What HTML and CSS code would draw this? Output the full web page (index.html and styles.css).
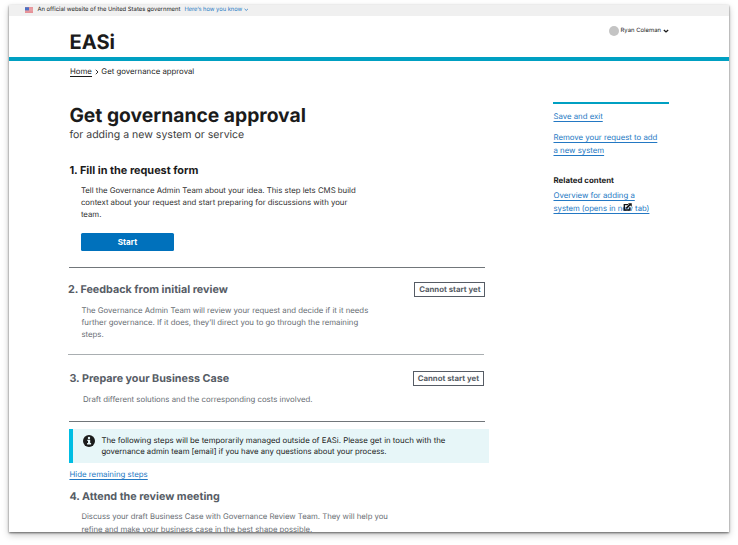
FILE: index.html
```html
<!DOCTYPE html>
<html lang="en">
<head>
<meta charset="utf-8">
<title>EASi – Get governance approval</title>
<link rel="stylesheet" href="styles.css">
</head>
<body>
<div class="page">
  <div class="gov-banner">
    <svg class="flag" viewBox="0 0 16 11"><rect width="16" height="11" fill="#f3d9dc"/><path d="M0 .8h16M0 3.2h16M0 5.6h16M0 8h16M0 10.3h16" stroke="#dd5a62" stroke-width="1.3"/><rect width="8" height="6.3" fill="#4a6fc4"/></svg>
    <span class="gov-text">An official website of the United States government</span>
    <a class="gov-link">Here’s how you know</a>
    <svg class="gov-chevron" viewBox="0 0 8 6"><path d="M1 1.500l3 2.700 3-2.700" fill="none" stroke="#2378c3" stroke-width="1.400"/></svg>
  </div>
  <header class="header">
    <div class="logo">EASi</div>
    <div class="user">
      <span class="avatar"></span>
      <span class="user-name">Ryan Coleman</span>
      <svg class="user-chevron" viewBox="0 0 12 8"><path d="M1.700 1.800L6 5.800l4.300-4" fill="none" stroke="#1b1b1b" stroke-width="2.700"/></svg>
    </div>
  </header>
  <nav class="breadcrumb">
    <a class="crumb-home">Home</a>
    <svg class="crumb-sep" viewBox="0 0 4 6"><path d="M.8.8L3 3 .8 5.200" fill="none" stroke="#1b1b1b" stroke-width=".9"/></svg>
    <span class="crumb-current">Get governance approval</span>
  </nav>
  <div class="columns">
    <main class="main">
      <h1 class="title">Get governance approval</h1>
      <p class="subtitle">for adding a new system or service</p>

      <section class="step step-1">
        <h2 class="step-title">1. Fill in the request form</h2>
        <p class="step-text dark">Tell the Governance Admin Team about your idea. This step lets CMS build<br>context about your request and start preparing for discussions with your<br>team.</p>
        <button class="start">Start</button>
      </section>

      <section class="step step-2">
        <div class="step-head">
          <h2 class="step-title muted">2. Feedback from initial review</h2>
          <span class="badge">Cannot start yet</span>
        </div>
        <p class="step-text">The Governance Admin Team will review your request and decide if it it needs<br>further governance. If it does, they’ll direct you to go through the remaining<br>steps.</p>
      </section>

      <section class="step step-3">
        <div class="step-head">
          <h2 class="step-title muted">3. Prepare your Business Case</h2>
          <span class="badge">Cannot start yet</span>
        </div>
        <p class="step-text">Draft different solutions and the corresponding costs involved.</p>
      </section>

      <div class="alert">
        <svg class="info" viewBox="0 0 12 12"><circle cx="6" cy="6" r="6" fill="#1b1b1b"/><circle cx="6" cy="3" r="1.200" fill="#e7f6f8"/><path d="M4.300 4.700h2.900v3.400h.9v1.500H4.100V8.100H5v-2h-.7z" fill="#e7f6f8"/></svg>
        <p class="alert-text">The following steps will be temporarily managed outside of EASi. Please get in touch with the<br><span class="alert-line2">governance admin team [email] if you have any questions about your process.</span></p>
      </div>
      <a class="link hide-link">Hide remaining steps</a>

      <section class="step step-4">
        <h2 class="step-title muted">4. Attend the review meeting</h2>
        <p class="step-text">Discuss your draft Business Case with Governance Review Team. They will help you<br>refine and make your business case in the best shape possible.</p>
      </section>
    </main>
    <aside class="side">
      <p class="side-item"><a class="link">Save and exit</a></p>
      <p class="side-item"><a class="link">Remove your request to add<br>a new system</a></p>
      <h3 class="side-title">Related content</h3>
      <p class="side-item related"><a class="link">Overview for adding a<br><span class="tight">system (opens in new tab)</span></a>
        <svg class="external" viewBox="0 0 10 9"><path d="M6 1.900H1.400v6h6.200V5" fill="none" stroke="#111" stroke-width="1.500"/><path d="M3.600 6L8 1.700" stroke="#111" stroke-width="1.900"/><path d="M5.500.2H9.800V4.300z" fill="#111"/></svg>
      </p>
    </aside>
  </div>
</div>
</body>
</html>
```
FILE: styles.css
```css
* { box-sizing: border-box; margin: 0; padding: 0; }
body {
  height: 545px;
  padding: 5px 9px 0;
  overflow: hidden;
  background: #fff;
  color: #1b1b1b;
  font: 7.8px/12px Inter, "Liberation Sans", sans-serif;
  text-rendering: geometricPrecision;
  white-space: nowrap;
}
svg { display: block; flex: none; }
.page {
  width: 720px;
  height: 527px;
  overflow: hidden;
  background: #fff;
  box-shadow: 0 1px 2px rgba(0, 0, 0, .55), 0 3px 7px rgba(0, 0, 0, .22);
}
.gov-banner {
  display: flex;
  align-items: center;
  height: 10.5px;
  padding-left: 16.4px;
  background: #f0f0f0;
  font-size: 5.9px;
  line-height: 10px;
}
.flag { width: 8px; height: 6px; margin-right: 4px; }
.gov-link { margin-left: 4px; color: #2378c3; font-size: 5.76px; }
.gov-chevron { width: 4.5px; height: 3.5px; margin: 0 0 1px 2px; }
.header {
  display: flex;
  justify-content: space-between;
  height: 45.5px;
  padding: 0 60px 0 60.5px;
  border-bottom: 4px solid #00a0c2;
}
.logo { padding-top: 14.2px; font-size: 20.1px; font-weight: 700; line-height: 24px; }
.user { display: flex; align-items: center; height: 10px; margin-top: 10.5px; }
.avatar { width: 10px; height: 10px; border-radius: 50%; background: #c4c4c4; }
.user-name { margin-left: 1.5px; font-size: 5.94px; line-height: 10px; }
.user-chevron { width: 6px; height: 4px; margin-left: 2px; }
.breadcrumb { display: flex; align-items: center; height: 20px; padding: 1.5px 0 0 61px; }
.crumb-home { height: 10px; border-bottom: 1px solid #1b1b1b; line-height: 9px; }
.crumb-sep { width: 4px; height: 6px; margin: 1px 2px 0 3.5px; }
.crumb-current { height: 10px; line-height: 9px; }
.columns { display: flex; padding-left: 60.4px; }
.main { width: 420px; padding-top: 22px; }
.title { font-size: 19.27px; line-height: 24px; }
.subtitle { height: 16px; color: #3d3d3d; font-size: 10.54px; line-height: 16px; }
.step-title { font-size: 10.75px; line-height: 14px; }
.muted { color: #565c65; }
.step { width: 416px; border-bottom: 1px solid #71767a; }
.step-text { padding-left: 12px; color: #686d73; }
.step-text.dark { color: #2e2e2e; }
.step-1 { height: 105.1px; margin-top: 19.7px; }
.step-1 .step-title { font-size: 10.88px; }
.step-1 .step-text { margin-top: 7.3px; padding-left: 11.5px; }
.start {
  display: block;
  width: 93px;
  height: 18px;
  margin: 13px 0 0 11.5px;
  border: 0;
  border-radius: 1.5px;
  background: #0071bc;
  color: #fff;
  font: 700 8.1px/18px Inter, "Liberation Sans", sans-serif;
}
.step-head { display: flex; justify-content: space-between; align-items: center; height: 15px; }
.badge {
  width: 71px;
  height: 15px;
  border: 1px solid #565c65;
  color: #565c65;
  font-size: 7.8px;
  font-weight: 700;
  line-height: 13px;
  text-align: center;
}
.step-2 { height: 87px; margin-left: -1.5px; padding-top: 14.5px; border-color: #a9aeb1; }
.step-2 .step-head { width: 417.5px; }
.step-2 .step-text { margin-top: 6.5px; padding-left: 13.5px; }
.step-3 { height: 67px; padding-top: 16.5px; }
.step-3 .step-head { width: 414.5px; }
.step-3 .step-text { margin-top: 6.5px; padding-left: 13.5px; }
.alert {
  display: flex;
  height: 34.3px;
  margin-top: 7.4px;
  padding: 6px 0 0 9.5px;
  border-left: 4px solid #00bde3;
  background: #e7f6f8;
}
.info { width: 12px; height: 12px; }
.alert-text { margin-left: 6.5px; font-size: 7.84px; line-height: 11px; }
.alert-line2 { font-size: 7.73px; }
.link {
  color: #2378c3;
  text-decoration: underline;
  text-decoration-thickness: 1px;
  text-underline-offset: 2px;
  text-decoration-skip-ink: none;
}
.hide-link { display: block; margin-top: 4.2px; font-size: 7.87px; }
.step-4 { margin-top: 10.4px; border: 0; }
.step-4 .step-text { margin-top: 7px; font-size: 7.73px; line-height: 12.5px; }
.side { width: 115.5px; height: 120px; margin: 21px 0 0 64.1px; border-top: 2px solid #00a0c2; padding-top: 6px; }
.side-item { margin-bottom: 7.6px; line-height: 13px; }
.side-title { margin-top: 17.5px; font-size: 7.88px; line-height: 12px; }
.related { position: relative; margin-top: 2.8px; }
.tight { font-size: 7.71px; }
.external { position: absolute; left: 69.5px; top: 14.5px; width: 9px; height: 8px; }
```
